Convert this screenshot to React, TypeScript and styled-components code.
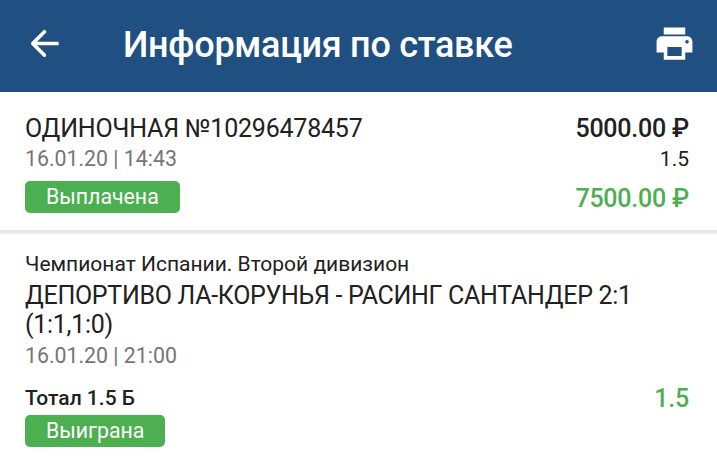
import React from 'react';
import styled, { createGlobalStyle } from 'styled-components';

const GlobalStyle = createGlobalStyle`
  * {
    box-sizing: border-box;
  }
  body {
    margin: 0;
    background: #ffffff;
    font-family: Roboto, "Noto Sans", sans-serif;
    color: #212121;
  }
`;

const Screen = styled.div`
  width: 717px;
  height: 456px;
  overflow: hidden;
  background: #ffffff;
`;

const Header = styled.header`
  display: flex;
  align-items: center;
  height: 92px;
  padding: 0 21px 6px 23px;
  background: #205081;
  color: #ffffff;
`;

const IconButton = styled.button`
  display: flex;
  padding: 0;
  border: none;
  background: none;
  color: inherit;
`;

const Title = styled.h1`
  flex: 1;
  margin: 0;
  padding: 4px 0 0 57px;
  font-size: 36px;
  font-weight: 500;
  line-height: 44px;
  letter-spacing: -0.3px;
  white-space: nowrap;
`;

const Section = styled.section<{ $first?: boolean }>`
  padding: ${({ $first }) => ($first ? '20px 28px 18px 25px' : '15px 28px 0 25px')};
`;

const Divider = styled.div`
  height: 5px;
  margin: -1px 0;
  background: linear-gradient(#e4e4e4, #e9e9e9 50%, #ffffff);
`;

const Row = styled.div<{ $height: number; $top?: number; $align?: string }>`
  display: flex;
  align-items: ${({ $align }) => $align ?? 'center'};
  justify-content: space-between;
  height: ${({ $height }) => $height}px;
  margin-top: ${({ $top }) => $top ?? 0}px;
`;

const Text = styled.span<{ $color?: string; $weight?: number }>`
  font-size: 21px;
  font-weight: ${({ $weight }) => $weight ?? 400};
  color: ${({ $color }) => $color ?? '#212121'};
  white-space: nowrap;
`;

const LargeText = styled(Text)`
  font-size: 25px;
  letter-spacing: -0.22px;
`;

const DateText = styled(Text)`
  font-size: 21.3px;
  color: #757575;
`;

const Teams = styled.p`
  margin: 2px 0 0;
  font-size: 25px;
  line-height: 29px;
  letter-spacing: -0.3px;
`;

const Badge = styled.span`
  height: 32px;
  padding: 0 21px;
  border-radius: 5px;
  background: #4caf50;
  color: #ffffff;
  font-size: 21.3px;
  line-height: 32px;
`;

const App: React.FC = () => {
  return (
    <>
      <GlobalStyle />
      <Screen>
        <Header>
          <IconButton aria-label="Назад">
            <svg width="43" height="43" viewBox="0 0 24 24" fill="currentColor">
              <path d="M19 11H7.83l4.88-4.88c.39-.39.39-1.03 0-1.42a1 1 0 0 0-1.41 0l-6.59 6.59a1 1 0 0 0 0 1.41l6.59 6.59a1 1 0 0 0 1.41-1.41L7.83 13H19.9v-2z" />
            </svg>
          </IconButton>
          <Title>Информация по ставке</Title>
          <IconButton aria-label="Печать">
            <svg width="43" height="43" viewBox="0 0 24 24" fill="currentColor">
              <path d="M19 8H5c-1.66 0-3 1.34-3 3v6h4v4h12v-4h4v-6c0-1.66-1.34-3-3-3zm-3 11H8v-5h8v5zm3-7c-.55 0-1-.45-1-1s.45-1 1-1 1 .45 1 1-.45 1-1 1zm-1-9H6v4h12V3z" />
            </svg>
          </IconButton>
        </Header>
        <Section $first>
          <Row $height={32}>
            <LargeText>ОДИНОЧНАЯ №10296478457</LargeText>
            <LargeText $weight={500}>5000.00 ₽</LargeText>
          </Row>
          <Row $height={29}>
            <DateText>16.01.20 | 14:43</DateText>
            <Text>1.5</Text>
          </Row>
          <Row $height={40} $align="flex-end">
            <Badge>Выплачена</Badge>
            <LargeText $weight={500} $color="#4caf50">7500.00 ₽</LargeText>
          </Row>
        </Section>
        <Divider />
        <Section>
          <Row $height={30}>
            <Text>Чемпионат Испании. Второй дивизион</Text>
          </Row>
          <Teams>
            ДЕПОРТИВО ЛА-КОРУНЬЯ - РАСИНГ САНТАНДЕР 2:1
            <br />
            (1:1,1:0)
          </Teams>
          <Row $height={32}>
            <DateText>16.01.20 | 21:00</DateText>
          </Row>
          <Row $height={34} $top={10}>
            <Text $weight={500}>Тотал 1.5 Б</Text>
            <LargeText $weight={500} $color="#4caf50">1.5</LargeText>
          </Row>
          <Row $height={32}>
            <Badge>Выиграна</Badge>
          </Row>
        </Section>
      </Screen>
    </>
  );
};

export default App;
